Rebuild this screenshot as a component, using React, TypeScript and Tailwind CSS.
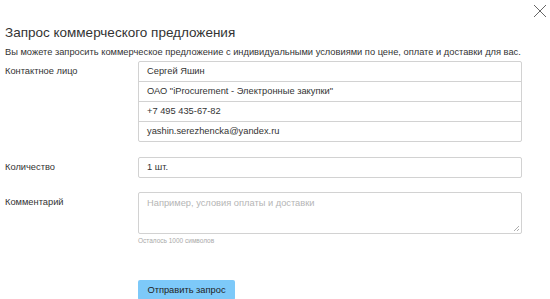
import React from "react";

export default function App() {
  const contact = [
    "Сергей Яшин",
    "ОАО \"iProcurement - Электронные закупки\"",
    "+7 495 435-67-82",
    "yashin.serezhencka@yandex.ru",
  ];
  return (
    <div
      className="relative w-[550px] h-[299px] bg-white text-[#333] overflow-hidden"
      style={{ fontFamily: '"Liberation Sans", Arial, sans-serif' }}
    >
      <button className="absolute right-[3px] top-[4px] w-[14px] h-[14px]">
        <svg width="14" height="14" viewBox="0 0 14 14">
          <path d="M1 1L13 13M13 1L1 13" stroke="#666" strokeWidth="1" />
        </svg>
      </button>
      <div className="pl-[5px] pt-[24px]">
        <h1 className="text-[13.5px] leading-[18px] text-[#333] whitespace-nowrap">Запрос коммерческого предложения</h1>
        <p className="text-[9.3px] leading-[14px] mt-[3px] whitespace-nowrap">
          Вы можете запросить коммерческое предложение с индивидуальными условиями по цене, оплате и доставки для вас.
        </p>
        <div className="grid grid-cols-[133px_384px] mt-[2px]">
          <div className="text-[9.3px] leading-[20px]">Контактное лицо</div>
          <div className="border border-[#d2d2d2] rounded-[2px]">
            {contact.map((c, i) => (
              <div
                key={i}
                className={`px-[8px] text-[9.3px] ${i > 0 ? "h-[20px] leading-[19px] border-t border-[#d2d2d2]" : "h-[19px] leading-[19px]"}`}
              >
                {c}
              </div>
            ))}
          </div>

          <div className="text-[9.3px] leading-[21px] mt-[15px]">Количество</div>
          <div className="mt-[15px] h-[21px] border border-[#d2d2d2] rounded-[2px] px-[8px] text-[9.3px] leading-[19px]">
            1 шт.
          </div>

          <div className="text-[9.3px] leading-[14px] mt-[14px] pt-[3px]">Комментарий</div>
          <div className="mt-[14px]">
            <div className="relative h-[42px] border border-[#d2d2d2] rounded-[2px] px-[8px] pt-[3px] text-[9.3px] leading-[14px] text-[#b5b5b5]">
              Например, условия оплаты и доставки
              <svg className="absolute right-[1px] bottom-[1px]" width="7" height="7" viewBox="0 0 7 7">
                <path d="M6 1L1 6M6 4L4 6" stroke="#999" strokeWidth="0.8" />
              </svg>
            </div>
            <div className="text-[6.5px] leading-[10px] text-[#aaa] mt-[2px]">Осталось 1000 символов</div>
          </div>

          <div></div>
          <div className="mt-[30px]">
            <button className="w-[97px] h-[20px] bg-[#7dc9f9] rounded-[2px] text-[9.3px] leading-[20px] text-[#222]">
              Отправить запрос
            </button>
          </div>
        </div>
      </div>
    </div>
  );
}
